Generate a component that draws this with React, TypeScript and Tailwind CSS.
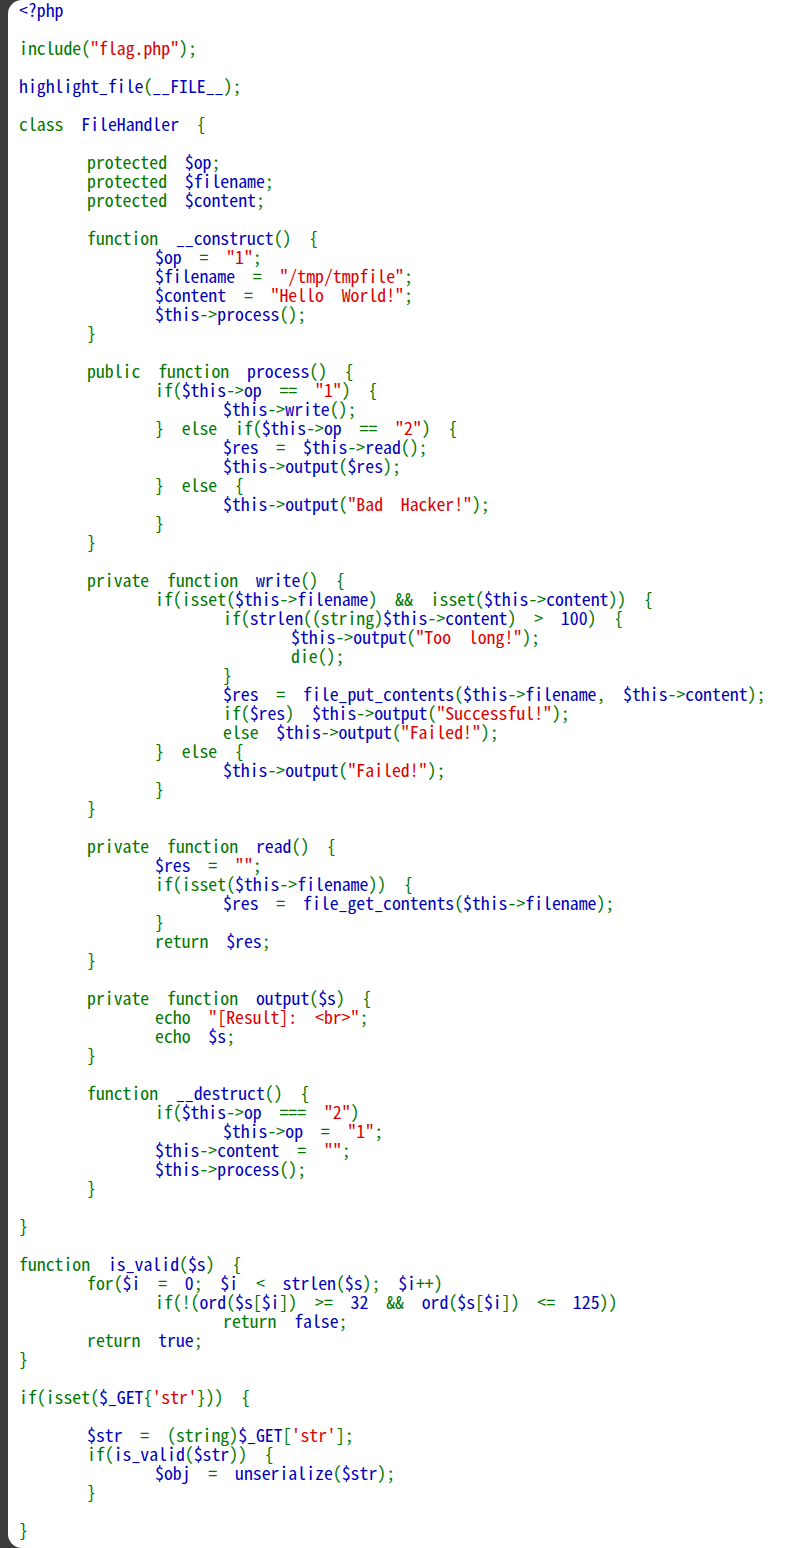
import React from "react";

const KEYWORDS = new Set([
  "include",
  "class",
  "protected",
  "public",
  "private",
  "function",
  "if",
  "else",
  "return",
  "echo",
  "die",
  "isset",
  "for",
]);

// [indent level, code] ; null = blank line
const LINES: ([number, string] | null)[] = [
  [0, "<?php"],
  null,
  [0, 'include("flag.php");'],
  null,
  [0, "highlight_file(__FILE__);"],
  null,
  [0, "class  FileHandler  {"],
  null,
  [1, "protected  $op;"],
  [1, "protected  $filename;"],
  [1, "protected  $content;"],
  null,
  [1, "function  __construct()  {"],
  [2, '$op  =  "1";'],
  [2, '$filename  =  "/tmp/tmpfile";'],
  [2, '$content  =  "Hello  World!";'],
  [2, "$this->process();"],
  [1, "}"],
  null,
  [1, "public  function  process()  {"],
  [2, 'if($this->op  ==  "1")  {'],
  [3, "$this->write();"],
  [2, '}  else  if($this->op  ==  "2")  {'],
  [3, "$res  =  $this->read();"],
  [3, "$this->output($res);"],
  [2, "}  else  {"],
  [3, '$this->output("Bad  Hacker!");'],
  [2, "}"],
  [1, "}"],
  null,
  [1, "private  function  write()  {"],
  [2, "if(isset($this->filename)  &&  isset($this->content))  {"],
  [3, "if(strlen((string)$this->content)  >  100)  {"],
  [4, '$this->output("Too  long!");'],
  [4, "die();"],
  [3, "}"],
  [3, "$res  =  file_put_contents($this->filename,  $this->content);"],
  [3, 'if($res)  $this->output("Successful!");'],
  [3, 'else  $this->output("Failed!");'],
  [2, "}  else  {"],
  [3, '$this->output("Failed!");'],
  [2, "}"],
  [1, "}"],
  null,
  [1, "private  function  read()  {"],
  [2, '$res  =  "";'],
  [2, "if(isset($this->filename))  {"],
  [3, "$res  =  file_get_contents($this->filename);"],
  [2, "}"],
  [2, "return  $res;"],
  [1, "}"],
  null,
  [1, "private  function  output($s)  {"],
  [2, 'echo  "[Result]:  <br>";'],
  [2, "echo  $s;"],
  [1, "}"],
  null,
  [1, "function  __destruct()  {"],
  [2, 'if($this->op  ===  "2")'],
  [3, '$this->op  =  "1";'],
  [2, '$this->content  =  "";'],
  [2, "$this->process();"],
  [1, "}"],
  null,
  [0, "}"],
  null,
  [0, "function  is_valid($s)  {"],
  [1, "for($i  =  0;  $i  <  strlen($s);  $i++)"],
  [2, "if(!(ord($s[$i])  >=  32  &&  ord($s[$i])  <=  125))"],
  [3, "return  false;"],
  [1, "return  true;"],
  [0, "}"],
  null,
  [0, "if(isset($_GET{'str'}))  {"],
  null,
  [1, "$str  =  (string)$_GET['str'];"],
  [1, "if(is_valid($str))  {"],
  [2, "$obj  =  unserialize($str);"],
  [1, "}"],
  null,
  [0, "}"],
];

const INDENT = ["pl-0", "pl-[68px]", "pl-[136px]", "pl-[204px]", "pl-[272px]"];

const TOKEN = /("[^"]*"|'[^']*'|\(string\)|<\?php|\$?[A-Za-z_][A-Za-z0-9_]*|\d+|\s+|.)/g;

function colorOf(tok: string) {
  if (tok[0] === '"' || tok[0] === "'") return "text-[#dd0000]";
  if (tok === "(string)") return "text-[#007700]";
  if (tok === "<?php" || tok[0] === "$" || /^\d/.test(tok)) return "text-[#0000bb]";
  if (/^[A-Za-z_]/.test(tok)) return KEYWORDS.has(tok) ? "text-[#007700]" : "text-[#0000bb]";
  return "text-[#007700]";
}

const CodeLine = ({ code }: { code: string }) => {
  const toks = code.match(TOKEN) ?? [];
  return (
    <>
      {toks.map((t, i) => (
        <span key={i} className={colorOf(t)}>
          {t}
        </span>
      ))}
    </>
  );
};

export default function App() {
  return (
    <div className="w-[788px] h-[1548px] bg-[#3b3b3b] flex overflow-hidden">
      <div className="flex-1 ml-[8px] bg-white rounded-l-[14px] pl-[11px]">
        <code className="block font-['Noto_Sans_Mono_CJK_SC','Liberation_Mono',monospace] text-[17.8px] leading-[19px]">
          {LINES.map((l, i) =>
            l ? (
              <div key={i} className={`h-[19px] whitespace-pre ${INDENT[l[0]]}`}>
                <CodeLine code={l[1]} />
              </div>
            ) : (
              <div key={i} className="h-[19px]" />
            )
          )}
        </code>
      </div>
    </div>
  );
}
